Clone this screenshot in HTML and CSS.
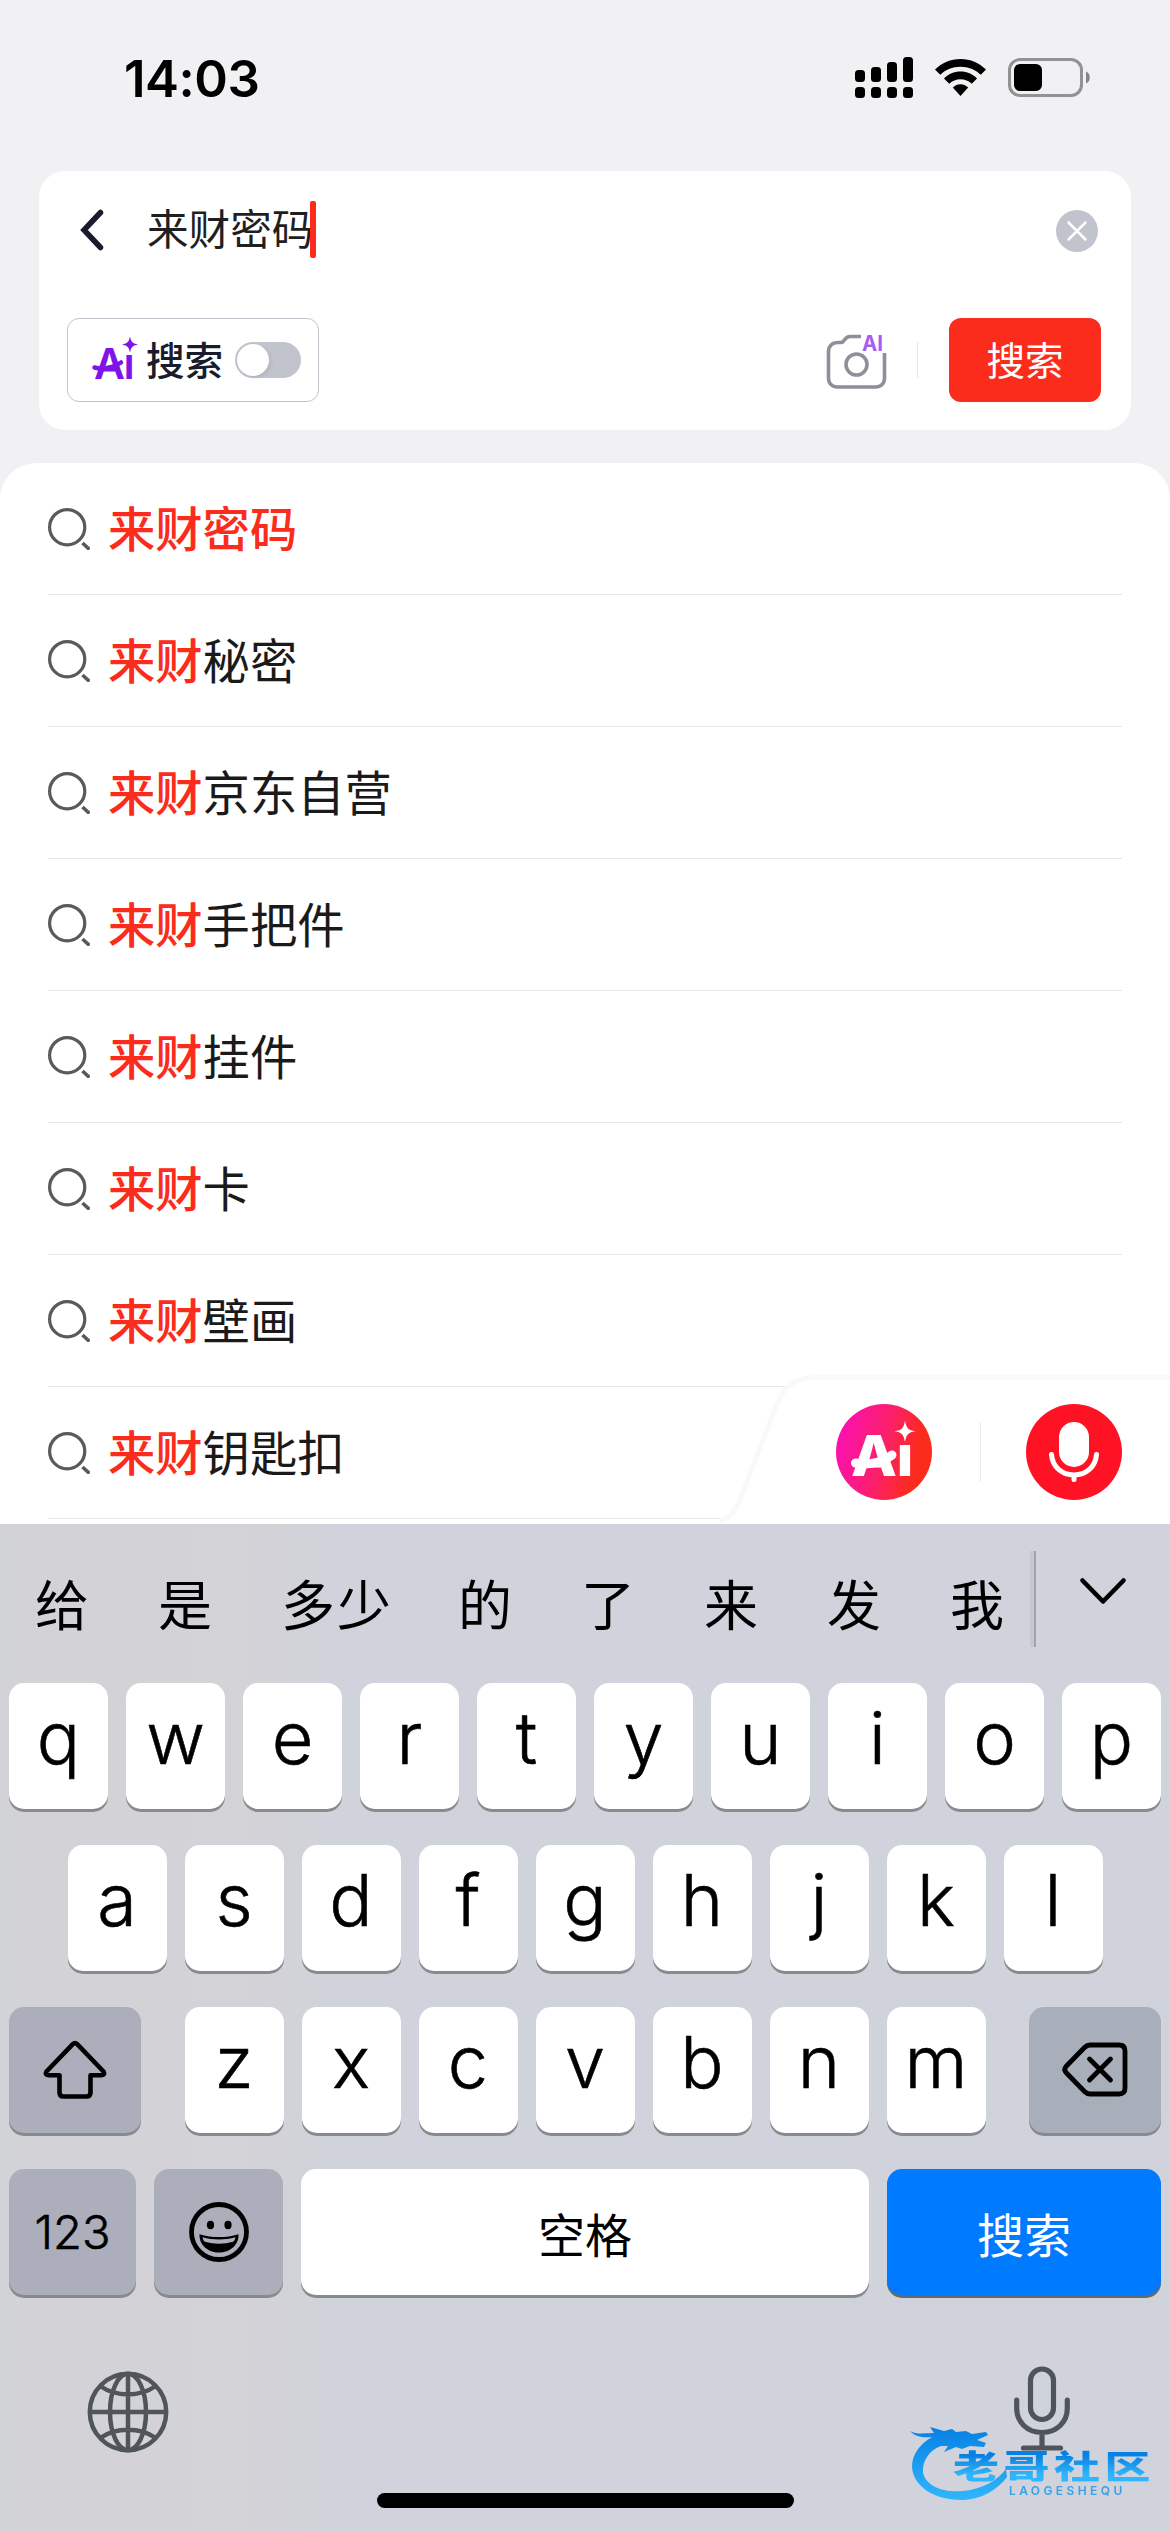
FILE: index.html
```html
<!DOCTYPE html>
<html lang="zh-CN">
<head>
    <meta charset="UTF-8">
    <meta name="viewport" content="width=device-width, initial-scale=1.0">
    <title>搜索</title>
    <link rel="stylesheet" href="styles.css">
</head>
<body>
    <svg class="defs" width="0" height="0">
        <symbol id="search" viewBox="0 0 42 42">
            <circle cx="19.2" cy="19.2" r="17.6" fill="none" stroke="#5a5a5a" stroke-width="3.2"/>
            <path d="M34.500 35l7 6.500" stroke="#5a5a5a" stroke-width="3.600"/>
        </symbol>
    </svg>

    <!-- Status bar -->
    <header class="status">
        <div class="time">14:03</div>
        <div class="status-icons">
            <svg width="58" height="41" viewBox="0 0 58 41">
                <rect x="0" y="13" width="10" height="12" rx="3.5"/>
                <rect x="16" y="10" width="10" height="15" rx="3.5"/>
                <rect x="32" y="5" width="10" height="20" rx="3.5"/>
                <rect x="48" y="0" width="10" height="25" rx="3.5"/>
                <rect x="0" y="30" width="10" height="11" rx="3.5"/>
                <rect x="16" y="30" width="10" height="11" rx="3.5"/>
                <rect x="32" y="30" width="10" height="11" rx="3.5"/>
                <rect x="48" y="30" width="10" height="11" rx="3.5"/>
            </svg>
            <svg class="wifi" width="51" height="37" viewBox="0 0 51 37">
                <path d="M25.5 0C35.500 0 44 4 51 10.500L45.800 15.700C40.200 10.600 33.500 7.700 25.500 7.700S10.800 10.600 5.200 15.700L0 10.500C7 4 15.500 0 25.500 0z"/>
                <path d="M25.500 12.600C32 12.600 37.500 15.200 42 19.500L36.800 24.700C33.600 21.900 30 20.200 25.500 20.200S17.400 21.900 14.200 24.700L9 19.500C13.500 15.200 19 12.600 25.500 12.600z"/>
                <path d="M25.500 25.300C28.500 25.300 31 26.500 33.200 28.600L25.500 37L17.800 28.600C20 26.500 22.500 25.300 25.500 25.300z"/>
            </svg>
            <svg width="83" height="39" viewBox="0 0 83 39">
                <rect x="1.500" y="1.500" width="72" height="36" rx="10.500" fill="none" stroke="#929295" stroke-width="3"/>
                <rect x="6" y="6" width="28" height="27" rx="6"/>
                <path d="M78 13.500c5 1.600 5 10.400 0 12z" fill="#858588"/>
            </svg>
        </div>
    </header>

    <!-- Search box -->
    <section class="search-card">
        <div class="query-row">
            <svg class="back" width="24" height="42" viewBox="0 0 24 42">
                <path d="M20.500 3.500L4 21L20.500 38.500" fill="none" stroke="#1a1b2b" stroke-width="5.500" stroke-linecap="round"/>
            </svg>
            <div class="query">来财密码</div>
            <div class="caret"></div>
            <svg class="clear" width="42" height="42" viewBox="0 0 42 42">
                <circle cx="21" cy="21" r="21" fill="#c1c4cd"/>
                <path d="M12.500 12.500l17 17M29.500 12.500l-17 17" stroke="#fff" stroke-width="2.500" stroke-linecap="round"/>
            </svg>
        </div>
        <div class="action-row">
            <div class="ai-switch">
                <svg class="ai-mark" width="48" height="60" viewBox="0 -7 48 60" fill="#7f14e8">
                    <text class="ai-letters" x="2" y="43" textLength="31" lengthAdjust="spacingAndGlyphs">A</text>
                    <text class="ai-letters" x="31.500" y="43">ı</text>
                    <path d="M2.500 31.500C11 34 22 31.500 29 26.500" fill="none" stroke="#7f14e8" stroke-width="4.500" stroke-linecap="round"/>
                    <path d="M38 0.500C39.200 6 40.500 7.300 46 8.500C40.500 9.700 39.200 11 38 16.500C36.800 11 35.500 9.700 30 8.500C35.500 7.300 36.800 6 38 0.500z"/>
                </svg>
                <span class="ai-label">搜索</span>
                <span class="toggle"><span class="knob"></span></span>
            </div>
            <svg class="camera" width="62" height="71" viewBox="0 -7 62 71">
                <path d="M35 3.500H24C18 3.500 19 9.500 15 9.500H12C6 9.500 2.500 13 2.500 19V45C2.500 50.500 6 54 11.500 54H49.500C55 54 58.500 50.500 58.500 45V20" fill="none" stroke="#8e8f9b" stroke-width="3.600"/>
                <circle cx="30.500" cy="31.500" r="10.500" fill="none" stroke="#8e8f9b" stroke-width="3.600"/>
                <text class="camera-text" x="36" y="18" textLength="21" lengthAdjust="spacingAndGlyphs">AI</text>
            </svg>
            <div class="action-line"></div>
            <button class="search-button">搜索</button>
        </div>
    </section>

    <!-- Suggestions -->
    <section class="results">
        <div class="row"><svg><use href="#search"/></svg><p><b>来财密码</b></p></div>
        <div class="row"><svg><use href="#search"/></svg><p><b>来财</b>秘密</p></div>
        <div class="row"><svg><use href="#search"/></svg><p><b>来财</b>京东自营</p></div>
        <div class="row"><svg><use href="#search"/></svg><p><b>来财</b>手把件</p></div>
        <div class="row"><svg><use href="#search"/></svg><p><b>来财</b>挂件</p></div>
        <div class="row"><svg><use href="#search"/></svg><p><b>来财</b>卡</p></div>
        <div class="row"><svg><use href="#search"/></svg><p><b>来财</b>壁画</p></div>
        <div class="row"><svg><use href="#search"/></svg><p><b>来财</b>钥匙扣</p></div>

        <!-- floating ai / voice panel -->
        <div class="voice-panel">
            <svg class="panel-shape" width="450" height="150" viewBox="0 0 450 150">
                <path d="M0 150C12 146 18 138 23 125L58 34C66 13 76 6 98 6H450V150z" fill="#fff" stroke="#f9f9f9" stroke-width="10"/>
                <path d="M0 150C12 146 18 138 23 125L58 34C66 13 76 6 98 6H450V150z" fill="#fff"/>
            </svg>
            <div class="panel-buttons">
                <svg width="96" height="96" viewBox="0 0 96 96">
                    <defs>
                        <linearGradient id="pink" x1="0" y1="0.350" x2="1" y2="0.600">
                            <stop offset="0" stop-color="#fb10b4"/>
                            <stop offset="0.500" stop-color="#fb2068"/>
                            <stop offset="0.850" stop-color="#fb2c1c"/>
                        </linearGradient>
                    </defs>
                    <circle cx="48" cy="48" r="48" fill="url(#pink)"/>
                    <text class="ai-big" x="15" y="72" textLength="46" lengthAdjust="spacingAndGlyphs">A</text>
                    <text class="ai-big" x="60.500" y="72" textLength="17" lengthAdjust="spacingAndGlyphs">ı</text>
                    <path d="M19.500 59C31 61.500 46 59 56 51" fill="none" stroke="#fff" stroke-width="9" stroke-linecap="round"/>
                    <path d="M69 16.500C70.500 24.500 72 26 79.500 27.200C72 28.500 70.500 30 69 38C67.500 30 66 28.500 58.500 27.200C66 26 67.500 24.500 69 16.500z" fill="#fff"/>
                </svg>
                <div class="panel-line"></div>
                <svg width="96" height="96" viewBox="0 0 96 96">
                    <circle cx="48" cy="48" r="48" fill="#ff1224"/>
                    <rect x="33" y="18" width="30" height="45" rx="15" fill="#fff"/>
                    <path d="M25.500 50.500C26.500 63 36 71 48 71S69.500 63 70.500 50.500M48 71V75.500" fill="none" stroke="#fff" stroke-width="5" stroke-linecap="round"/>
                </svg>
            </div>
        </div>
    </section>

    <!-- Keyboard -->
    <section class="keyboard">
        <div class="candidates">
            <span>给</span>
            <span>是</span>
            <span class="two">多少</span>
            <span>的</span>
            <span>了</span>
            <span>来</span>
            <span>发</span>
            <span>我</span>
            <div class="candidate-line"></div>
            <svg width="46" height="27" viewBox="0 0 46 27">
                <path d="M2.500 2.500L23 23.500L43.500 2.500" fill="none" stroke="#000" stroke-width="4.600" stroke-linecap="round" stroke-linejoin="round"/>
            </svg>
        </div>

        <div class="keys">
            <div class="key-row">
                <div class="key">q</div><div class="key">w</div><div class="key">e</div><div class="key">r</div><div class="key">t</div><div class="key">y</div><div class="key">u</div><div class="key">i</div><div class="key">o</div><div class="key">p</div>
            </div>
            <div class="key-row">
                <div class="key">a</div><div class="key">s</div><div class="key">d</div><div class="key">f</div><div class="key">g</div><div class="key">h</div><div class="key">j</div><div class="key">k</div><div class="key">l</div>
            </div>
            <div class="key-row spread">
                <div class="key gray wide">
                    <svg width="64" height="60" viewBox="0 0 64 60">
                        <path d="M29.800 4.200Q32 2 34.200 4.200L60.500 31.500Q62.500 35 58.500 35.200H47.500V52.500Q47.500 56.500 43.500 56.500H20.500Q16.500 56.500 16.500 52.500V35.200H5.500Q1.500 35 3.500 31.500z" fill="none" stroke="#000" stroke-width="4.600" stroke-linejoin="round"/>
                    </svg>
                </div>
                <div class="key-group">
                    <div class="key">z</div><div class="key">x</div><div class="key">c</div><div class="key">v</div><div class="key">b</div><div class="key">n</div><div class="key">m</div>
                </div>
                <div class="key gray-right wide">
                    <svg width="66" height="56" viewBox="0 0 66 56">
                        <path d="M28 3H57Q63 3 63 9V46Q63 52 57 52H28Q25 52 22.500 49.500L4 30.500Q1.500 27.500 4 24.500L22.500 5.500Q25 3 28 3z" fill="none" stroke="#000" stroke-width="4.800" stroke-linejoin="round"/>
                        <path d="M27.500 17l21 21M48.500 17l-21 21" stroke="#000" stroke-width="4.800" stroke-linecap="round"/>
                    </svg>
                </div>
            </div>
            <div class="key-row spread">
                <div class="key gray numbers">123</div>
                <div class="key gray emoji">
                    <svg width="62" height="62" viewBox="0 0 62 62">
                        <circle cx="31" cy="31" r="27.500" fill="none" stroke="#000" stroke-width="4.800"/>
                        <ellipse cx="22.500" cy="24" rx="3.600" ry="4.200"/>
                        <ellipse cx="40" cy="24" rx="3.600" ry="4.200"/>
                        <path d="M11.500 33.200C24 37 38 37 50.500 33.200C51 44 42 51.500 31 51.500S11 44 11.500 33.200z"/>
                        <path d="M14.500 36.300C25 39.300 37 39.300 47.500 36.300C46.800 39.500 46 40.500 45 40.700C36 43.300 26 43.300 17 40.700C16 40.500 15.200 39.500 14.500 36.300z" fill="#acafbb"/>
                    </svg>
                </div>
                <div class="key space">空格</div>
                <div class="key enter">搜索</div>
            </div>
        </div>

        <div class="bottom-bar">
            <svg width="82" height="82" viewBox="0 0 82 82" fill="none" stroke="#50555c" stroke-width="4.500">
                <circle cx="41" cy="41" r="38.200"/>
                <ellipse cx="41" cy="41" rx="18" ry="38.200"/>
                <path d="M41 3V79M3 41H79M14 15.500C29 26 53 26 68 15.500M14 66.500C29 56 53 56 68 66.500"/>
            </svg>
            <svg width="56" height="86" viewBox="0 0 56 86" fill="none" stroke="#50555c" stroke-width="5.200" stroke-linecap="round">
                <rect x="16.500" y="3" width="23" height="50.500" rx="11.500"/>
                <path d="M2.700 34V42C2.700 56 13 66.500 28 66.500S53.300 56 53.300 42V34M28 66.500V81.500M9.500 82H46.500"/>
            </svg>
        </div>
        <div class="home-bar"></div>
    </section>

    <!-- Site badge -->
    <div class="badge">
        <svg class="badge-ring" width="110" height="90" viewBox="0 0 110 90">
            <defs>
                <linearGradient id="blue" x1="0" y1="0" x2="0" y2="1">
                    <stop offset="0" stop-color="#0780e4"/>
                    <stop offset="1" stop-color="#30b6fc"/>
                </linearGradient>
            </defs>
            <path fill="url(#blue)" d="M0 11C7 15 15 13 24 13L20 7L34 11L42 9L46 12L56 11L62 14L76 12L78 15L67 20L76 23L74 27L60 26L52 29L46 27L34 32L38 26L31 26C20 30 12 40 13 53C16 66 33 73 53 71C73 69 88 60 96 49L97 57C87 70 71 80 51 80C24 80 3 66 2 47C2 34 10 24 22 17C14 18 5 17 0 11z"/>
        </svg>
        <div class="badge-name">老哥社区</div>
        <div class="badge-sub">LAOGESHEQU</div>
    </div>
</body>
</html>
```
FILE: styles.css
```css
* {
    box-sizing: border-box;
}

body {
    margin: 0;
    width: 1170px;
    height: 2532px;
    overflow: hidden;
    position: relative;
    background: #f1f1f4;
    color: #1a1a1a;
    font-family: "Noto Sans CJK SC", sans-serif;
}

svg {
    display: block;
    flex-shrink: 0;
    overflow: visible;
}

.defs {
    position: absolute;
}

/* status bar */
.status {
    height: 171px;
    padding: 57px 79px 0 124px;
    display: flex;
    justify-content: space-between;
}

.time {
    font-family: Inter, sans-serif;
    font-size: 51px;
    font-weight: 600;
    line-height: 43px;
    letter-spacing: -0.5px;
    color: #000;
}

.status-icons {
    display: flex;
    align-items: flex-start;
    gap: 22px;
}

.status-icons svg + svg {
    margin-top: 1px;
}

.status-icons .wifi {
    margin-top: 2px;
}

/* search card */
.search-card {
    height: 259px;
    margin: 0 39px;
    border-radius: 26px;
    background: #fff;
}

.query-row {
    height: 147px;
    padding: 0 33px 0 41px;
    display: flex;
    align-items: flex-start;
}

.back {
    margin-top: 38px;
}

.query {
    margin: 26px 0 0 43px;
    font-size: 41.6px;
    line-height: 60px;
    width: 163px;
    white-space: nowrap;
    color: #1f1f1f;
}

.caret {
    width: 6px;
    height: 57px;
    margin-top: 30px;
    border-radius: 2px;
    background: #fb2c1b;
    z-index: 1;
}

.clear {
    margin: 39px 0 0 auto;
}

.action-row {
    display: flex;
    align-items: center;
    height: 84px;
    padding: 0 30px 0 28px;
}

.ai-switch {
    width: 252px;
    height: 84px;
    border: 1.5px solid #c1c4cd;
    border-radius: 12px;
    display: flex;
    align-items: center;
    padding-left: 24px;
}

.ai-mark {
    margin-top: -3px;
}

.ai-letters {
    font-family: Inter, sans-serif;
    font-size: 43px;
    font-weight: 600;
}

.ai-label {
    margin: -4px 0 0 6px;
    font-size: 38.6px;
    font-weight: 500;
    line-height: 56px;
    color: #1a1b2b;
}

.toggle {
    width: 66px;
    height: 36px;
    margin-left: 12px;
    padding: 2px;
    border-radius: 18px;
    background: #c1c4cd;
}

.knob {
    display: block;
    width: 32px;
    height: 32px;
    border-radius: 50%;
    background: #fff;
    box-shadow: 2px 2px 4px rgba(0, 0, 0, 0.08);
}

.camera {
    margin-left: auto;
    margin-top: 2px;
}

.camera-text {
    font-family: Inter, sans-serif;
    font-size: 22px;
    font-weight: 700;
    fill: #a75cf3;
}

.action-line {
    width: 1px;
    height: 36px;
    margin: 0 31px 0 29px;
    background: #e6e6ea;
}

.search-button {
    width: 152px;
    height: 84px;
    padding: 0 0 5px;
    border: none;
    border-radius: 12px;
    background: #fb2c1b;
    color: #fff;
    font-family: inherit;
    font-size: 38.6px;
}

/* suggestions */
.results {
    position: relative;
    height: 1061px;
    margin-top: 33px;
    padding: 0 48px;
    border-radius: 36px 36px 0 0;
    background: #fff;
}

.row {
    height: 132px;
    border-bottom: 1px solid #e6e6e6;
    display: flex;
    align-items: center;
}

.row svg {
    width: 42px;
    height: 42px;
}

.row p {
    margin: 0 0 3px 18px;
    font-size: 47.3px;
    line-height: 68px;
}

.row b {
    font-weight: 500;
    color: #fb2c1b;
}

.voice-panel {
    position: absolute;
    right: 0;
    bottom: 0;
    width: 450px;
    height: 150px;
    overflow: hidden;
}

.panel-shape {
    position: absolute;
}

.panel-buttons {
    position: relative;
    display: flex;
    align-items: center;
    justify-content: flex-end;
    height: 150px;
    padding: 6px 48px 0 0;
}

.panel-line {
    width: 1px;
    height: 60px;
    margin: 0 45px 0 48px;
    background: #ebebee;
}

.ai-big {
    font-family: Inter, sans-serif;
    font-size: 57px;
    font-weight: 800;
    fill: #fff;
}

/* keyboard */
.keyboard {
    height: 1008px;
    background: linear-gradient(to right, #d2d3d7 0, #d3d2d7 150px, #d2d3d8 290px, #d0d3db 325px);
    color: #000;
}

.candidates {
    height: 159px;
    padding-left: 35px;
    display: flex;
    align-items: flex-start;
}

.candidates span {
    margin: 40px 69px 0 0;
    font-size: 54px;
    line-height: 78px;
    white-space: nowrap;
}

.candidates .two {
    margin-left: 0;
    margin-right: 65px;
    letter-spacing: 2px;
}

.candidates span:nth-of-type(8) {
    margin-right: 26px;
}

.candidate-line {
    width: 6px;
    height: 96px;
    margin-top: 27px;
    border-right: 2px solid #a2a4a9;
    background: #c5c8ce;
}

.candidates svg {
    margin: 54px 0 0 44px;
}

.keys {
    padding: 0 9px;
    display: flex;
    flex-direction: column;
    gap: 36px;
}

.key-row,
.key-group {
    display: flex;
    justify-content: center;
    gap: 18px;
}

.spread {
    justify-content: space-between;
}

.key {
    width: 99px;
    height: 126px;
    border-radius: 15px;
    background: #fff;
    box-shadow: 0 3px 0 #898a8d;
    text-align: center;
    font-family: Inter, "Noto Sans CJK SC", sans-serif;
    font-size: 72px;
    font-weight: 300;
    line-height: 110px;
    -webkit-text-stroke: 0.6px #000;
}

.gray,
.gray-right {
    display: flex;
    align-items: center;
    justify-content: center;
    background: #acafbb;
}

.gray-right {
    background: #a9aebb;
}

.wide {
    width: 132px;
}

.numbers {
    width: 127px;
    font-size: 47px;
}

.emoji {
    width: 129px;
}

.space,
.enter {
    width: 568px;
    font-family: "Noto Sans CJK SC", sans-serif;
    font-size: 47px;
    font-weight: 400;
    line-height: 128px;
    -webkit-text-stroke: 0;
}

.enter {
    width: 274px;
    background: #007aff;
    color: #fff;
    box-shadow: 0 3px 0 #66686d;
}

.bottom-bar {
    height: 198px;
    padding: 71px 100px 0 87px;
    display: flex;
    justify-content: space-between;
    align-items: flex-start;
}

.bottom-bar svg:first-child {
    margin-top: 5px;
}

.home-bar {
    width: 417px;
    height: 15px;
    margin: 0 auto;
    border-radius: 8px;
    background: #000;
}

/* site badge */
.badge {
    position: absolute;
    left: 910px;
    top: 2420px;
    width: 250px;
    height: 90px;
    filter: blur(0.6px);
}

.badge-ring {
    position: absolute;
    left: 0;
    top: 0;
}

.badge-name {
    position: absolute;
    left: 43px;
    top: 22px;
    font-size: 46px;
    font-weight: 900;
    line-height: 46px;
    letter-spacing: 4.500px;
    white-space: nowrap;
    background: linear-gradient(#0780e4 20%, #30b6fc 80%);
    -webkit-background-clip: text;
    background-clip: text;
    color: transparent;
    transform: scaleY(0.72);
    transform-origin: 0 50%;
}

.badge-sub {
    position: absolute;
    left: 99px;
    top: 65px;
    font-family: Inter, sans-serif;
    font-size: 12px;
    font-weight: 600;
    line-height: 12px;
    letter-spacing: 3.400px;
    color: #3a9fe6;
}
```
